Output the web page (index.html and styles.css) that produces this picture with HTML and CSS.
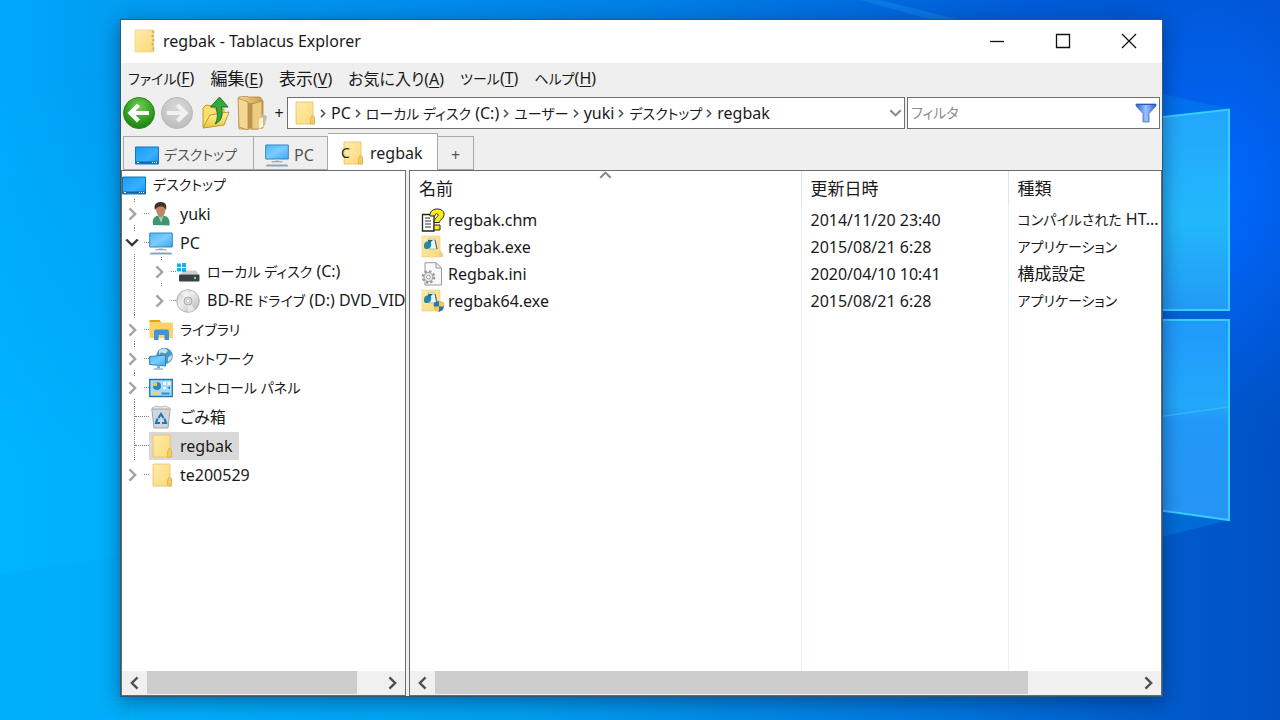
FILE: index.html
```html
<!DOCTYPE html>
<html lang="ja">
<head>
<meta charset="utf-8">
<title>regbak - Tablacus Explorer</title>
<link rel="stylesheet" href="styles.css">
</head>
<body>
<svg class="defs" aria-hidden="true">
  <defs>
    <linearGradient id="gFolder" x1="0" y1="0" x2="1" y2="1"><stop offset="0" stop-color="#ffebab"/><stop offset="1" stop-color="#fbd978"/></linearGradient>
    <linearGradient id="gScreen" x1="0" y1="0" x2="1" y2="1"><stop offset="0" stop-color="#4cb9f8"/><stop offset=".5" stop-color="#7ccbff"/><stop offset="1" stop-color="#37a8f2"/></linearGradient>
    <linearGradient id="gDesk" x1="0" y1="0" x2="1" y2="1"><stop offset="0" stop-color="#1d9bf5"/><stop offset=".6" stop-color="#36b0ff"/><stop offset="1" stop-color="#1490ea"/></linearGradient>
    <radialGradient id="gGreen" cx=".5" cy=".3" r=".7"><stop offset="0" stop-color="#6fce56"/><stop offset=".6" stop-color="#35a323"/><stop offset="1" stop-color="#1c7f10"/></radialGradient>
    <radialGradient id="gGrey" cx=".5" cy=".3" r=".7"><stop offset="0" stop-color="#d8d8d8"/><stop offset="1" stop-color="#bcbebc"/></radialGradient>
    <linearGradient id="gOpen" x1="0" y1="0" x2="0" y2="1"><stop offset="0" stop-color="#fff6a5"/><stop offset="1" stop-color="#f0c63c"/></linearGradient>
    <linearGradient id="gTan" x1="0" y1="0" x2="1" y2="0"><stop offset="0" stop-color="#f3d894"/><stop offset="1" stop-color="#c99a45"/></linearGradient>
    <linearGradient id="gFunnel" x1="0" y1="0" x2="1" y2="0"><stop offset="0" stop-color="#2d5fd0"/><stop offset=".5" stop-color="#9cc4ff"/><stop offset="1" stop-color="#2d5fd0"/></linearGradient>
    <linearGradient id="gDisc" x1="0" y1="0" x2="1" y2="1"><stop offset="0" stop-color="#c4c4c4"/><stop offset=".4" stop-color="#efefef"/><stop offset="1" stop-color="#b5b5b5"/></linearGradient>
    <symbol id="i-folder" viewBox="0 0 24 24"><path d="M4 1h17v15h1.500v7H4z" fill="url(#gFolder)" stroke="#e6c15c" stroke-width=".8"/><path d="M18.500 23v-6l2-3 2 2v7z" fill="#f3cb62" stroke="#d9b04a" stroke-width=".7"/></symbol>
    <symbol id="i-zip" viewBox="0 0 24 24"><path d="M2 1h18.500v22H2z" fill="url(#gFolder)" stroke="#efcf7b" stroke-width=".7"/><path d="M20 1v22" stroke="#eac66a" stroke-width="2.400" stroke-dasharray="3 1.500"/><path d="M19.500 3h2M18.500 7h2M19.500 11h2M18.500 15h2M19.500 19h2" stroke="#9fae6b" stroke-width="1.200"/></symbol>
    <symbol id="i-desktop" viewBox="0 0 24 24"><path d="M.5 4h23v17H.5z" fill="url(#gDesk)" stroke="#1576bd"/><path d="M1 19.500h22" stroke="#0965a8" stroke-width="2"/><path d="M2 19.500h2M17 19.500h1M19 19.500h1M21 19.500h1" stroke="#fff"/></symbol>
    <symbol id="i-pc" viewBox="0 0 24 24"><path d="M.7 2h22.600v14H.7z" fill="url(#gScreen)" stroke="#3585b8"/><path d="M10 16.500h4v2h-4z" fill="#c8d2da"/><path d="M6.500 18.800h11" stroke="#89959f"/><path d="M2 21.500h20l1.500 2H.5z" fill="#88a5bc"/></symbol>
    <symbol id="i-user" viewBox="0 0 24 24"><path d="M4 23c-1-6 1-9 6-9.500l6 .5c4 1 5 5 4.500 9.500z" fill="#409574"/><path d="M9 13l3 8 3-8z" fill="#9bd2b7"/><path d="M7 5c0-4 9-5 9.500 0 .5 4-1.500 10-4.500 10S6.500 9 7 5z" fill="#bc8962"/><path d="M6 8C4 1 9 0 12 0c5 0 6 4 5 8-1-3-3-4-6-3.500C8 5 7 6 6 8z" fill="#403028"/></symbol>
    <symbol id="i-hdd" viewBox="0 0 24 24"><path d="M4 14.500l3-4h13l3 4z" fill="#cbd0d4"/><rect x="3" y="14.500" width="20.500" height="7" rx="1" fill="#3c4043"/><circle cx="19" cy="18" r="1.200" fill="#60e878"/><path d="M1 3.500h4v3.500H1zM6 3h4v4H6zM1 8h4v3.500H1zM6 8h4v4H6z" fill="#18b3ef"/></symbol>
    <symbol id="i-disc" viewBox="0 0 24 24"><circle cx="12" cy="12" r="11.300" fill="url(#gDisc)" stroke="#a6a6a6" stroke-width=".8"/><path d="M12 12L5 3.500Q9 1 12 1zM12 12l7 8.500q-4 3-7 2.500z" fill="#fff" opacity=".5"/><circle cx="12" cy="12" r="4" fill="#ddd" stroke="#aaa"/><circle cx="12" cy="12" r="1.800" fill="#fff" stroke="#aaa" stroke-width=".6"/></symbol>
    <symbol id="i-lib" viewBox="0 0 24 24"><path d="M.5 2h10l2 2.500H.5z" fill="#e2a313"/><path d="M.5 4.500H24V20H.5z" fill="#fcd364"/><path d="M5 22v-8.500q0-2 2-2h11q2 0 2 2V22h-4.500v-5h-6v5z" fill="#3f94d8"/></symbol>
    <symbol id="i-net" viewBox="0 0 24 24"><circle cx="15.500" cy="9" r="8.300" fill="#4f98c6"/><path d="M10 4c3-3 6-3 8-1s-2 4-4 3-3 0-4 2zM19 11c2-3 3-2 4-3 0 4-2 6-4 7z" fill="#c3e2ee"/><path d="M.6 9.500l16-1.500v11l-16-1.500z" fill="url(#gScreen)" stroke="#3180b4"/><path d="M8 18.500h3v3H8z" fill="#7faecb"/><path d="M5 22h9" stroke="#9db8c8" stroke-width="1.500"/></symbol>
    <symbol id="i-ctrl" viewBox="0 0 24 24"><path d="M.7 3.500h22.600v17H.7z" fill="#a2dcfb" stroke="#2277ae" stroke-width="1.300"/><circle cx="8" cy="10" r="4" fill="#3684bc"/><path d="M8 10V6a4 4 0 0 0-4 4z" fill="#f4c944"/><path d="M14 6h3v3h-3zM18.500 6h3v3h-3zM14 11h3v2h-3z" fill="#fff"/><path d="M18 12l3-2v3z" fill="#3684bc"/><path d="M3 17.500h8" stroke="#f2d272" stroke-width="2"/><path d="M12.500 17.500h8" stroke="#2a8cd4" stroke-width="2"/></symbol>
    <symbol id="i-bin" viewBox="0 0 24 24"><path d="M3 3l4-2 5 1 5-1 4 2-1 3H4z" fill="#e8ebee" stroke="#aab0b6" stroke-width=".8"/><path d="M2.800 4h18.400L19 23H5z" fill="#d2d7dc" stroke="#a1a8ae"/><path d="M9.500 13l2.500-4 2.500 4M8.500 13.500L7 18h4M15.500 13.500L17 18h-4" fill="none" stroke="#1d78bc" stroke-width="2.200"/></symbol>
    <symbol id="i-chm" viewBox="0 0 24 24"><path d="M1.500 6.500H13V23H1.500z" fill="#fff" stroke="#222" stroke-width="1.300"/><path d="M4 10h5M4 13h6M4 16h6M4 19h6" stroke="#333"/><path d="M9 8c-1-9 14-9 14-2 0 5-4 5-4.500 8.500H13C13 9 18 9 17 6.500c-1-1.500-3-1-3 1.500zM13 17h6v5h-6z" fill="#f8ec14" stroke="#222" stroke-width="1"/></symbol>
    <symbol id="i-exe" viewBox="0 0 24 24"><path d="M1 1h18v21H1z" fill="url(#gFolder)" stroke="#efd27d" stroke-width=".6"/><path d="M19 15l3 4v3h-4z" fill="#edcf85"/><path d="M7 4h7l2 10H8z" fill="#eaf5f8" stroke="#93b3be" stroke-width=".7"/><path d="M3 10c0-4 6-5 7-2s-1 6-4 6-3-1-3-4z" fill="#208ba2"/><path d="M7 5h5l-4 4z" fill="#226c87"/><path d="M14 5l2 9" stroke="#41606b"/></symbol>
    <symbol id="i-exe64" viewBox="0 0 24 24"><use href="#i-exe"/><path d="M18 12l5 1.500c1 5-1 8-5 9.500-4-1.500-6-4.500-5-9.500z" fill="#2b6fc2"/><path d="M18 12l5 1.500v4h-5zM13 17.500h5V23c-3-1-5-3-5-5.500z" fill="#f7cb45"/></symbol>
    <symbol id="i-ini" viewBox="0 0 24 24"><path d="M4 .7h11L20.500 6v17H4z" fill="#f8f8f8" stroke="#999"/><path d="M15 1v5h5" fill="none" stroke="#999"/><circle cx="7.500" cy="15" r="5.500" fill="#eee" stroke="#999" stroke-width="2.500" stroke-dasharray="2.300 2"/><circle cx="7.500" cy="15" r="4.500" fill="#ececec" stroke="#999"/><circle cx="7.500" cy="15" r="1.900" fill="#fff" stroke="#999"/></symbol>
    <symbol id="i-back" viewBox="0 0 34 34"><circle cx="17" cy="17" r="15.500" fill="url(#gGreen)" stroke="#2b8a1d"/><path d="M27 17H9M16.500 9L8.500 17l8 8" fill="none" stroke="#fff" stroke-width="4.200"/></symbol>
    <symbol id="i-fwd" viewBox="0 0 34 34"><circle cx="17" cy="17" r="15.500" fill="url(#gGrey)" stroke="#b8b8b8"/><path d="M7 17h18M17.500 9l8 8-8 8" fill="none" stroke="#f2f2f2" stroke-width="4.200"/></symbol>
    <symbol id="i-up" viewBox="0 0 34 34"><path d="M5 31V12l3-3 7 1 2 3h9v6L11 31z" fill="#f7df6b" stroke="#c19a28"/><path d="M5 32l7-13 19-3-5 13z" fill="url(#gOpen)" stroke="#c19a28"/><path d="M17 28c7-3 8-9 6.500-17H30L21.500 1 12.500 11H18c2 8 2 12-1 17z" fill="#35a83b" stroke="#157322"/></symbol>
    <symbol id="i-folders" viewBox="0 0 34 34"><path d="M3 1l8-1 1 1h12l3 4v27l-8 1H3z" fill="url(#gTan)" stroke="#b58a45" stroke-width=".8"/><path d="M12 7h10v25H12z" fill="#bd9351"/><path d="M2 2l10 4v28L3 31z" fill="#f3d792" stroke="#b58a45" stroke-width=".8"/><path d="M16 8l10-3v23l-3 5h-7z" fill="#edcb80" stroke="#b58a45" stroke-width=".8"/><path d="M26 18l5 2-2 9-3 2z" fill="#c6bba3"/><path d="M23 23l4-2v10l-4 2z" fill="#fff2c5"/></symbol>
    <symbol id="i-right" viewBox="0 0 10 16"><path d="M1.500 1.500L8 8l-6.500 6.500" fill="none" stroke="currentColor" stroke-width="2.800"/></symbol>
    <symbol id="i-left" viewBox="0 0 10 16"><path d="M8.500 1.500L2 8l6.500 6.500" fill="none" stroke="currentColor" stroke-width="2.800"/></symbol>
    <symbol id="i-down" viewBox="0 0 16 10"><path d="M1.500 1.500L8 8l6.500-6.500" fill="none" stroke="currentColor" stroke-width="2.600"/></symbol>
    <symbol id="i-funnel" viewBox="0 0 22 20"><path d="M1 1h20v2l-7 7.500V19H8v-8.500L1 3z" fill="url(#gFunnel)" stroke="#4470cc" stroke-width=".8"/><path d="M1.500 1.500h19" stroke="#2855b8"/></symbol>
  </defs>
</svg>

<svg class="wallpaper" viewBox="0 0 1280 720" preserveAspectRatio="none" aria-hidden="true">
  <defs>
    <linearGradient id="wBase" x1="0" y1="0" x2="1" y2="0"><stop offset="0" stop-color="#00a8fb"/><stop offset=".1" stop-color="#009cf0"/><stop offset=".5" stop-color="#0080e6"/><stop offset=".8" stop-color="#005cd8"/><stop offset="1" stop-color="#0054d0"/></linearGradient>
    <linearGradient id="wLow" x1="0" y1="0" x2="1" y2="0"><stop offset="0" stop-color="#00b4ff"/><stop offset=".4" stop-color="#00a0f0"/><stop offset=".75" stop-color="#0074dc"/><stop offset=".9" stop-color="#005ccc"/><stop offset="1" stop-color="#0050c4"/></linearGradient>
    <linearGradient id="wFade" x1="0" y1="0" x2="0" y2="1"><stop offset=".1" stop-color="#fff" stop-opacity="0"/><stop offset=".65" stop-color="#fff"/></linearGradient>
    <mask id="wMask"><path d="M0 0h1280v720H0z" fill="url(#wFade)"/></mask>
    <radialGradient id="wGlow"><stop offset="0" stop-color="#0068ff"/><stop offset="1" stop-color="#0068ff" stop-opacity="0"/></radialGradient>
    <linearGradient id="wPane" x1="0" y1="0" x2="0" y2="1"><stop offset="0" stop-color="#23a6fb"/><stop offset=".55" stop-color="#22b8fb"/><stop offset="1" stop-color="#239af6"/></linearGradient>
    <linearGradient id="wPane2" x1="0" y1="0" x2="0" y2="1"><stop offset="0" stop-color="#2199fb"/><stop offset=".43" stop-color="#22a8fb"/><stop offset=".5" stop-color="#2298f8"/><stop offset="1" stop-color="#2694f5"/></linearGradient>
  </defs>
  <path d="M0 0h1280v720H0z" fill="url(#wBase)"/>
  <path d="M0 0h1280v720H0z" fill="url(#wLow)" mask="url(#wMask)"/>
  <ellipse cx="1220" cy="190" rx="150" ry="230" fill="url(#wGlow)"/>
  <path d="M0 574l130-19v165H0z" fill="#00a8f4" opacity=".35"/>
  <path d="M860 0l90 25h30L880 0z" fill="#24a6f5" opacity=".25"/>
  <path d="M1150 91l79 18v411l-79 20z" fill="#0090f0" opacity=".35"/>
  <path d="M1150 310h80v10h-80z" fill="#0062d8"/>
  <path d="M1150 118.500l79-9V310h-79z" fill="url(#wPane)" stroke="#35d0fd" stroke-width="2"/>
  <path d="M1150 320h79v200l-79-11z" fill="url(#wPane2)" stroke="#35d0fd" stroke-width="2"/>
  <path d="M1150 418l78-11" stroke="#30b8fc" stroke-width="1.500"/>
</svg>

<main class="window">
  <header class="titlebar">
    <svg class="icon"><use href="#i-zip"/></svg>
    <h1 class="title">regbak - Tablacus Explorer</h1>
    <div class="caption-buttons">
      <button class="caption" aria-label="最小化"><svg viewBox="0 0 16 16"><path d="M1 8.500h14" /></svg></button>
      <button class="caption" aria-label="最大化"><svg viewBox="0 0 16 16"><path d="M1.500 1.500h13v13h-13z"/></svg></button>
      <button class="caption" aria-label="閉じる"><svg viewBox="0 0 16 16"><path d="M1 1l14 14M15 1L1 15"/></svg></button>
    </div>
  </header>

  <nav class="menubar">
    <button class="menu"><span class="kana">ファイル</span>(<u>F</u>)</button>
    <button class="menu"><span class="kanji">編集</span>(<u>E</u>)</button>
    <button class="menu"><span class="kanji">表示</span>(<u>V</u>)</button>
    <button class="menu">お気に入り(<u>A</u>)</button>
    <button class="menu"><span class="kana">ツール</span>(<u>T</u>)</button>
    <button class="menu"><span class="kana">ヘルプ</span>(<u>H</u>)</button>
  </nav>

  <div class="toolbar">
    <div class="tools">
      <button class="tool" aria-label="戻る"><svg><use href="#i-back"/></svg></button>
      <button class="tool" aria-label="進む"><svg><use href="#i-fwd"/></svg></button>
      <button class="tool" aria-label="上へ"><svg><use href="#i-up"/></svg></button>
      <button class="tool" aria-label="フォルダ"><svg><use href="#i-folders"/></svg></button>
      <button class="plus">+</button>
    </div>
    <div class="address">
      <svg class="icon"><use href="#i-folder"/></svg>
      <svg class="sep"><use href="#i-right"/></svg><button class="crumb">PC</button>
      <svg class="sep"><use href="#i-right"/></svg><button class="crumb"><span class="kana">ローカル ディスク</span> (C:)</button>
      <svg class="sep"><use href="#i-right"/></svg><button class="crumb"><span class="kana">ユーザー</span></button>
      <svg class="sep"><use href="#i-right"/></svg><button class="crumb">yuki</button>
      <svg class="sep"><use href="#i-right"/></svg><button class="crumb"><span class="kana">デスクトップ</span></button>
      <svg class="sep"><use href="#i-right"/></svg><button class="crumb">regbak</button>
      <button class="dropdown" aria-label="履歴"><svg><use href="#i-down"/></svg></button>
    </div>
    <div class="filter">
      <input class="filter-input" type="text" placeholder="フィルタ" aria-label="フィルタ">
      <button class="filter-button" aria-label="絞り込み"><svg><use href="#i-funnel"/></svg></button>
    </div>
  </div>

  <div class="tabs">
    <button class="tab tab-desktop"><svg class="icon"><use href="#i-desktop"/></svg><span class="kana">デスクトップ</span></button>
    <button class="tab tab-pc"><svg class="icon"><use href="#i-pc"/></svg>PC</button>
    <button class="tab tab-active"><span class="drive-icon"><svg class="icon"><use href="#i-folder"/></svg><span class="drive">C</span></span>regbak</button>
    <button class="tab tab-new">+</button>
  </div>

  <div class="panes">
    <section class="pane tree-pane">
      <div class="pane-body">
        <div class="row root"><svg class="icon"><use href="#i-desktop"/></svg><span class="label kana">デスクトップ</span></div>
        <ul class="tree">
          <li><div class="row"><button class="toggle" aria-label="展開"><svg class="chev"><use href="#i-right"/></svg></button><i class="dots"></i><svg class="icon"><use href="#i-user"/></svg><span class="label">yuki</span></div></li>
          <li><div class="row"><button class="toggle open" aria-label="折りたたむ"><svg class="chev-down"><use href="#i-down"/></svg></button><i class="dots"></i><svg class="icon"><use href="#i-pc"/></svg><span class="label">PC</span></div>
            <ul class="tree nested">
              <li><div class="row"><button class="toggle" aria-label="展開"><svg class="chev"><use href="#i-right"/></svg></button><i class="dots"></i><svg class="icon"><use href="#i-hdd"/></svg><span class="label"><span class="kana">ローカル ディスク</span> (C:)</span></div></li>
              <li><div class="row"><button class="toggle" aria-label="展開"><svg class="chev"><use href="#i-right"/></svg></button><i class="dots"></i><svg class="icon"><use href="#i-disc"/></svg><span class="label">BD-RE <span class="kana">ドライブ</span> (D:) DVD_VID</span></div></li>
            </ul>
          </li>
          <li><div class="row"><button class="toggle" aria-label="展開"><svg class="chev"><use href="#i-right"/></svg></button><i class="dots"></i><svg class="icon"><use href="#i-lib"/></svg><span class="label kana">ライブラリ</span></div></li>
          <li><div class="row"><button class="toggle" aria-label="展開"><svg class="chev"><use href="#i-right"/></svg></button><i class="dots"></i><svg class="icon"><use href="#i-net"/></svg><span class="label kana">ネットワーク</span></div></li>
          <li><div class="row"><button class="toggle" aria-label="展開"><svg class="chev"><use href="#i-right"/></svg></button><i class="dots"></i><svg class="icon"><use href="#i-ctrl"/></svg><span class="label kana">コントロール パネル</span></div></li>
          <li><div class="row leaf"><i class="dots"></i><svg class="icon"><use href="#i-bin"/></svg><span class="label">ごみ箱</span></div></li>
          <li><div class="row leaf"><i class="dots"></i><span class="selected"><svg class="icon"><use href="#i-folder"/></svg><span class="label">regbak</span></span></div></li>
          <li><div class="row"><button class="toggle" aria-label="展開"><svg class="chev"><use href="#i-right"/></svg></button><i class="dots"></i><svg class="icon"><use href="#i-folder"/></svg><span class="label">te200529</span></div></li>
        </ul>
      </div>
      <div class="scrollbar">
        <button class="arrow" aria-label="左へ"><svg class="chev"><use href="#i-left"/></svg></button>
        <div class="track"><div class="thumb" style="width:90%"></div></div>
        <button class="arrow" aria-label="右へ"><svg class="chev"><use href="#i-right"/></svg></button>
      </div>
    </section>

    <section class="pane list-pane">
      <div class="pane-body">
        <table class="files">
          <colgroup><col class="col-name"><col class="col-date"><col></colgroup>
          <thead><tr><th>名前<svg class="sort"><use href="#i-down"/></svg></th><th>更新日時</th><th>種類</th></tr></thead>
          <tbody>
            <tr class="file"><td><span class="name"><svg class="icon"><use href="#i-chm"/></svg>regbak.chm</span></td><td>2014/11/20 23:40</td><td><span class="kana">コンパイルされた</span> HT...</td></tr>
            <tr class="file"><td><span class="name"><svg class="icon"><use href="#i-exe"/></svg>regbak.exe</span></td><td>2015/08/21 6:28</td><td><span class="kana">アプリケーション</span></td></tr>
            <tr class="file"><td><span class="name"><svg class="icon"><use href="#i-ini"/></svg>Regbak.ini</span></td><td>2020/04/10 10:41</td><td><span class="kanji">構成設定</span></td></tr>
            <tr class="file"><td><span class="name"><svg class="icon"><use href="#i-exe64"/></svg>regbak64.exe</span></td><td>2015/08/21 6:28</td><td><span class="kana">アプリケーション</span></td></tr>
            <tr><td></td><td></td><td></td></tr>
          </tbody>
        </table>
      </div>
      <div class="scrollbar">
        <button class="arrow" aria-label="左へ"><svg class="chev"><use href="#i-left"/></svg></button>
        <div class="track"><div class="thumb" style="width:84.6%"></div></div>
        <button class="arrow" aria-label="右へ"><svg class="chev"><use href="#i-right"/></svg></button>
      </div>
    </section>
  </div>
</main>
</body>
</html>
```

FILE: styles.css
```css
* { box-sizing: border-box; }

body {
  margin: 0;
  height: 100vh;
  padding: 19px 117px 23px 120px;
  display: flex;
  overflow: hidden;
  background: #0088e8;
  color: #1a1a1a;
  font: 16px/24px "Noto Sans", "Noto Sans CJK JP", sans-serif;
  font-feature-settings: "palt";
}

button {
  margin: 0;
  padding: 0;
  border: 0;
  background: none;
  color: inherit;
  font: inherit;
  font-feature-settings: inherit;
  white-space: nowrap;
}

svg { display: block; flex: none; }
.defs { position: absolute; width: 0; height: 0; }
.wallpaper { position: absolute; inset: 0; width: 100%; height: 100%; }
.icon { width: 24px; height: 24px; }
.chev { width: 9px; height: 14px; }
.chev-down { width: 14px; height: 9px; }
.kana { font-size: 14px; }
.kanji { font-size: 17px; }

.window {
  position: relative;
  flex: 1;
  min-width: 0;
  display: flex;
  flex-direction: column;
  border: 1px solid #34566e;
  background: #efefef;
  box-shadow: 0 5px 18px rgba(0, 20, 60, .45);
}

.titlebar {
  height: 43px;
  display: flex;
  align-items: center;
  gap: 6px;
  padding: 0 0 2px 12px;
  background: #fff;
}
.title { margin: 0; flex: 1; font-size: 16px; font-weight: 400; }
.caption-buttons { display: flex; }
.caption {
  width: 66px;
  height: 40px;
  display: flex;
  align-items: center;
  justify-content: center;
}
.caption svg { width: 16px; height: 16px; fill: none; stroke: #111; stroke-width: 1.3; }

.menubar {
  height: 33px;
  display: flex;
  align-items: center;
  gap: 16px;
  padding: 0 0 2px 7px;
}
.menu u { text-underline-offset: 2px; }

.toolbar { display: flex; align-items: center; gap: 2px; padding-right: 2px; }
.tools { width: 164px; display: flex; align-items: center; gap: 4px; padding-left: 1px; }
.tool svg { width: 34px; height: 34px; }
.plus { width: 10px; text-align: center; }
.address, .filter {
  height: 32px;
  display: flex;
  align-items: center;
  border: 1px solid #707070;
  background: #fff;
}
.address { flex: 1; padding: 0 2px 0 4px; min-width: 0; }
.sep { width: 6px; height: 9px; margin: 0 5px 0 4px; color: #555; }
.dropdown { margin-left: auto; color: #8a8a8a; }
.dropdown svg { width: 13px; height: 8px; }
.filter { width: 253px; padding: 0 2px 0 3px; }
.filter-input {
  flex: 1;
  min-width: 0;
  padding: 0;
  border: 0;
  outline: 0;
  background: none;
  font: inherit;
  font-size: 14px;
  font-feature-settings: inherit;
}
.filter-input::placeholder { color: #8c8c8c; opacity: 1; }
.filter-button svg { width: 22px; height: 20px; }

.tabs { height: 40px; display: flex; align-items: flex-end; padding-left: 2px; }
.tab {
  height: 34px;
  display: flex;
  align-items: center;
  gap: 5px;
  padding: 3px 11px 0;
  border: 1px solid #aaa;
  border-width: 1px 1px 1px 0;
  color: #555;
}
.tab-desktop { border-left-width: 1px; width: 131px; }
.tab-pc { width: 74px; }
.tab-active {
  width: 110px;
  height: 37px;
  gap: 6px;
  padding-top: 2px;
  border-bottom: 0;
  background: #fff;
  color: #222;
}
.drive-icon { position: relative; padding-left: 1px; }
.drive { position: absolute; left: 2px; top: 0; font-size: 14px; }
.tab-new { width: 36px; justify-content: center; padding: 4px 0 0; }

.panes { flex: 1; min-height: 0; display: flex; gap: 3px; }
.pane {
  display: flex;
  flex-direction: column;
  min-width: 0;
  border: 1px solid #6b6b6b;
  background: #fff;
}
.tree-pane { width: 285px; }
.list-pane { flex: 1; }
.pane-body { flex: 1; min-height: 0; overflow: hidden; }

.row { height: 29px; display: flex; align-items: center; white-space: nowrap; }
.root { height: 28px; }
.label { padding-left: 7px; }
.tree { margin: 0; padding: 0; list-style: none; }
.nested { padding-left: 27px; }
.tree li { position: relative; }
.tree li::before {
  content: "";
  position: absolute;
  left: 12px;
  top: 0;
  bottom: 0;
  border-left: 1px dotted #777;
}
.tree li:last-child::before { display: none; }
.toggle {
  position: relative;
  flex: none;
  width: 20px;
  height: 21px;
  display: flex;
  align-items: center;
  justify-content: center;
  background: #fff;
  color: #a3a3a3;
}
.open { color: #333; }
.dots { flex: none; width: 7px; border-top: 1px dotted #777; border-left: 3px solid transparent; }
.leaf { padding-left: 13px; }
.leaf .dots { width: 14px; border-left: 0; }
.selected {
  height: 28px;
  display: flex;
  align-items: center;
  padding-right: 6px;
  background: #d9d9d9;
}

.files {
  width: 100%;
  height: 100%;
  table-layout: fixed;
  border-collapse: collapse;
}
.col-name { width: 391px; }
.col-date { width: 207px; }
.files th, .files td {
  padding: 0 0 0 9px;
  border-left: 1px solid #e6f2fb;
  text-align: left;
  white-space: nowrap;
}
.files th:first-child, .files td:first-child { border-left: 0; }
.files th { position: relative; height: 35px; border-left-color: #dfe6ea; font-size: 17px; font-weight: 400; }
.files .file { height: 27px; }
.name { display: flex; align-items: center; gap: 3px; padding-left: 2px; }
.sort {
  position: absolute;
  left: calc(50% - 6px);
  top: 0;
  width: 13px;
  height: 8px;
  color: #888;
  rotate: 180deg;
}

.scrollbar { height: 24px; display: flex; background: #f0f0f0; }
.arrow {
  width: 25px;
  display: flex;
  align-items: center;
  justify-content: center;
  color: #505050;
}
.track { flex: 1; }
.thumb { height: 23px; background: #cdcdcd; }
```
